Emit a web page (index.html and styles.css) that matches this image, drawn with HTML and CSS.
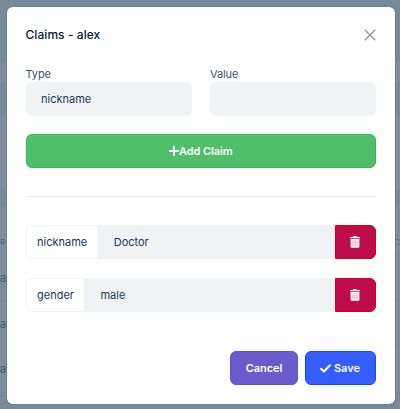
FILE: index.html
```html
<!DOCTYPE html>
<html lang="en">
<head>
<meta charset="utf-8">
<title>Claims</title>
<link rel="stylesheet" href="styles.css">
</head>
<body>
<div class="page">
  <div class="band top"></div>
  <div class="band bar"></div>
  <div class="band upper"></div>
  <div class="band card"></div>
  <div class="band gap"></div>
  <div class="thead"><span>RO</span><span>C</span></div>
  <div class="trow">ac</div>
  <div class="trow">ac</div>
  <div class="trow">ac</div>
</div>
<div class="modal">
  <header class="head">
    <h1>Claims - alex</h1>
    <svg class="close" viewBox="0 0 12 12"><path d="M.8.8 11.2 11.2M11.2.8.8 11.2"/></svg>
  </header>
  <div class="fields">
    <label>Type<span class="input">nickname</span></label>
    <label>Value<span class="input"></span></label>
  </div>
  <button class="btn add"><svg class="plus" viewBox="0 0 10 10"><path d="M5 .9v8.2M.9 5h8.2"/></svg>Add Claim</button>
  <hr>
  <div class="claim">
    <span class="name">nickname</span><span class="value">Doctor</span>
    <button class="delete"><svg viewBox="0 0 10 12"><path class="lid" d="M0 .9h3L3.600 0h2.800L7 .9h3v1.400H0z"/><path class="can" d="M.6 2.900h8.800v7.600q0 1.200-1.200 1.200H1.800Q.6 11.700 .6 10.500z"/><path class="slots" d="M3 4.300v5.800M5 4.300v5.800M7 4.300v5.800"/></svg></button>
  </div>
  <div class="claim">
    <span class="name">gender</span><span class="value">male</span>
    <button class="delete"><svg viewBox="0 0 10 12"><path class="lid" d="M0 .9h3L3.600 0h2.800L7 .9h3v1.400H0z"/><path class="can" d="M.6 2.900h8.800v7.600q0 1.200-1.200 1.200H1.800Q.6 11.700 .6 10.500z"/><path class="slots" d="M3 4.300v5.800M5 4.300v5.800M7 4.300v5.800"/></svg></button>
  </div>
  <footer class="foot">
    <button class="btn cancel">Cancel</button>
    <button class="btn save"><svg class="check" viewBox="0 0 11 9"><path d="M1 4.700 4 7.500 10 1.300"/></svg>Save</button>
  </footer>
</div>
</body>
</html>
```
FILE: styles.css
```css
* { box-sizing: border-box; }
body {
  margin: 0;
  width: 400px;
  height: 409px;
  overflow: hidden;
  position: relative;
  background: #778b9b;
  font: 11px/16px Inter, sans-serif;
  color: #16395a;
}
.page { display: flex; flex-direction: column; height: 409px; color: #3b5a76; }
.band { flex: none; }
.top { height: 63px; background: #768a9a; }
.bar { height: 19px; background: #7e8e9e; }
.upper { height: 34px; background: #768a9a; }
.card { height: 73px; background: #7d8e9e; }
.gap { height: 18px; background: #768a9b; }
.thead {
  height: 48px;
  padding: 27px 0 0;
  display: flex;
  justify-content: space-between;
  font-size: 8px;
  color: #506a80;
  background: #7c8e9e;
  border-bottom: 1px solid #768999;
}
.trow {
  height: 45.500px;
  padding-top: 15px;
  flex: none;
  background: #7c8e9e;
  border-bottom: 1px solid #768999;
}
.trow:last-child { height: 47px; }
.modal {
  position: absolute;
  left: 6.500px;
  top: 7px;
  width: 388px;
  height: 397px;
  padding: 19px 18.500px 0 19px;
  background: #fff;
  border-radius: 6px;
  box-shadow: 0 0 1px 1px #6a8094;
}
.head { display: flex; justify-content: space-between; align-items: center; height: 18px; }
h1 { margin: 0; font-size: 12px; font-weight: 500; letter-spacing: .06px; color: #0b1a33; }
.close { width: 12px; height: 12px; fill: none; stroke: #8797ab; stroke-width: 1.300; }
.fields { display: grid; grid-template-columns: 1fr 1fr; gap: 18.500px; margin-top: 22px; }
label { display: block; color: #35526e; letter-spacing: -.1px; }
.input {
  display: block;
  height: 34px;
  padding: 9px 15.500px;
  border-radius: 6px;
  background: #eff3f6;
  color: #16395a;
  letter-spacing: 0;
}
button { font: 600 11px/16px Inter, sans-serif; color: #fff; }
.btn {
  display: flex;
  align-items: center;
  justify-content: center;
  height: 34px;
  padding: 0;
  border: 1px solid;
  border-radius: 6px;
}
.add { width: 100%; margin-top: 18px; background: #50bf69; border-color: #30b958; letter-spacing: -.08px; }
.plus { width: 10px; height: 10px; fill: none; stroke: #fff; stroke-width: 1.900; stroke-linecap: round; }
hr { height: 1px; margin: 28px 0 27.500px; border: 0; background: #e5e7e9; }
.claim { display: flex; height: 34px; margin-bottom: 19px; }
.name {
  padding: 8px 10px 0 10.500px;
  border: 1px solid #f0f3f5;
  border-right: 0;
  border-radius: 6px 0 0 6px;
}
.value { flex: 1; padding: 9px 16.500px; background: #eff3f6; }
.delete {
  width: 41.500px;
  padding: 0;
  display: flex;
  align-items: center;
  justify-content: center;
  background: #be0b49;
  border: 1px solid #c30718;
  border-radius: 0 6px 6px 0;
}
.delete svg { width: 10px; height: 12px; }
.lid, .can { fill: #fff; }
.slots { stroke: #dc7595; stroke-width: .7; }
.foot { display: flex; justify-content: flex-end; gap: 6.500px; margin-top: 39.500px; }
.cancel { width: 68px; background: #6c5bcd; border-color: #6650cd; letter-spacing: -.08px; }
.save { width: 71.500px; gap: 2.500px; background: #355dff; border-color: #0d4dff; }
.check { width: 11px; height: 9px; fill: none; stroke: #fff; stroke-width: 2; stroke-linecap: round; stroke-linejoin: round; }
```
